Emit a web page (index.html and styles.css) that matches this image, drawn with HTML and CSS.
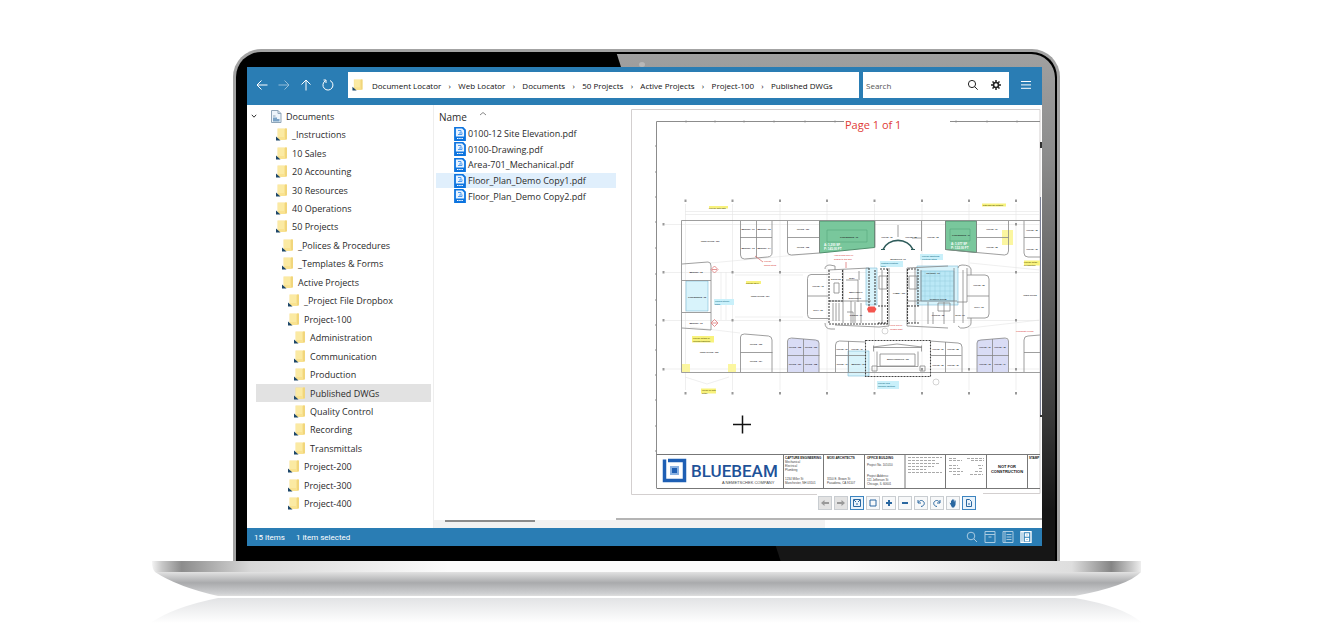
FILE: index.html
```
<!DOCTYPE html>
<html lang="en">
<head>
  <meta charset="UTF-8">
  <title>Document Locator</title>
  <link rel="stylesheet" href="styles.css">
</head>
<body>

  <!-- shared icons -->
  <svg class="defs" width="0" height="0" aria-hidden="true">
    <symbol id="folder" viewBox="0 0 12 13">
      <path d="M1.500 .5h9v10.500l-1.500 1h-7.500z" fill="#f9e290"/>
      <path d="M9 .5h2v11H9z" fill="#f1d67c"/>
      <path d="M2 1h6v8H2z" fill="#fbeaa3"/>
      <path d="M0 8.500l4.500 4H0z" fill="#1d4669"/>
    </symbol>
    <symbol id="pdf" viewBox="0 0 12 14">
      <path d="M1 .5h7.500L11 3v10.500H1z" fill="#e8f3ff" stroke="#0d74df" stroke-width="1.800"/>
      <path d="M1 9.500h10v4H1z" fill="#0d74df"/>
      <path d="M4 3.500h3v2.500H5M8 5.500v2H4" fill="none" stroke="#4b9af0"/>
      <path d="M3 11.500h6" stroke="#fff" stroke-dasharray="1.500 .7"/>
    </symbol>
  </svg>

  <div class="laptop">
    <div class="lid">
      <span class="camera"></span>
      <main class="screen">

        <header class="toolbar">
          <div class="nav-buttons">
            <button aria-label="Back"><svg viewBox="0 0 12 12"><path d="M11.500 6H1M5.500 1.500L1 6l4.500 4.500"/></svg></button>
            <button aria-label="Forward" class="dim"><svg viewBox="0 0 12 12"><path d="M.5 6H11M6.500 1.500L11 6l-4.500 4.500"/></svg></button>
            <button aria-label="Up"><svg viewBox="0 0 12 12"><path d="M6 11.500V1M1.500 5.500L6 1l4.500 4.500"/></svg></button>
            <button aria-label="Refresh"><svg viewBox="0 0 12 12"><path d="M8 1.500a5 5 0 1 1-4.500.2M1.500 1h2.500v3"/></svg></button>
          </div>
          <nav class="address">
            <svg class="folder"><use href="#folder"/></svg>
            <a href="#">Document Locator</a><i>›</i>
            <a href="#">Web Locator</a><i>›</i>
            <a href="#">Documents</a><i>›</i>
            <a href="#">50 Projects</a><i>›</i>
            <a href="#">Active Projects</a><i>›</i>
            <a href="#">Project-100</a><i>›</i>
            <a href="#">Published DWGs</a>
          </nav>
          <div class="search">
            <input type="text" placeholder="Search" aria-label="Search">
            <button aria-label="Find"><svg viewBox="0 0 12 12"><circle cx="5" cy="5" r="3.600"/><path d="M7.700 7.700l3 3"/></svg></button>
            <button aria-label="Settings"><svg viewBox="0 0 12 12"><circle cx="6" cy="6" r="2.500" stroke-width="1.600"/><path d="M6 1v2M6 9v2M1 6h2M9 6h2M2.500 2.500l1.300 1.300M8.200 8.200l1.300 1.300M9.500 2.500L8.200 3.800M3.800 8.200L2.500 9.500" stroke-width="1.500"/></svg></button>
          </div>
          <button class="menu" aria-label="Menu"><svg viewBox="0 0 12 12"><path d="M1 2.500h10M1 5.900h10M1 9.300h10"/></svg></button>
        </header>

        <div class="main">
          <ul class="tree">
            <li class="root"><svg class="chevron" viewBox="0 0 6 6"><path d="M.8 1.800L3 4.200l2.200-2.400"/></svg><svg class="doc" viewBox="0 0 12 13"><path d="M1.500.5h6.500l3 3v9H1.500z" fill="#edf4fa" stroke="#8fa5b8"/><path d="M8 .5v3h3M3 6h2.500" fill="none" stroke="#8fa5b8"/><path d="M3 7.500h4v1.500h2.500v2.500H3z" fill="#7ba3c6"/></svg><a href="#">Documents</a></li>
            <li class="l1"><svg class="folder"><use href="#folder"/></svg><a href="#">_Instructions</a></li>
            <li class="l1"><svg class="folder"><use href="#folder"/></svg><a href="#">10 Sales</a></li>
            <li class="l1"><svg class="folder"><use href="#folder"/></svg><a href="#">20 Accounting</a></li>
            <li class="l1"><svg class="folder"><use href="#folder"/></svg><a href="#">30 Resources</a></li>
            <li class="l1"><svg class="folder"><use href="#folder"/></svg><a href="#">40 Operations</a></li>
            <li class="l1"><svg class="folder"><use href="#folder"/></svg><a href="#">50 Projects</a></li>
            <li class="l2"><svg class="folder"><use href="#folder"/></svg><a href="#">_Polices &amp; Procedures</a></li>
            <li class="l2"><svg class="folder"><use href="#folder"/></svg><a href="#">_Templates &amp; Forms</a></li>
            <li class="l2"><svg class="folder"><use href="#folder"/></svg><a href="#">Active Projects</a></li>
            <li class="l3"><svg class="folder"><use href="#folder"/></svg><a href="#">_Project File Dropbox</a></li>
            <li class="l3"><svg class="folder"><use href="#folder"/></svg><a href="#">Project-100</a></li>
            <li class="l4"><svg class="folder"><use href="#folder"/></svg><a href="#">Administration</a></li>
            <li class="l4"><svg class="folder"><use href="#folder"/></svg><a href="#">Communication</a></li>
            <li class="l4"><svg class="folder"><use href="#folder"/></svg><a href="#">Production</a></li>
            <li class="l4 selected"><svg class="folder"><use href="#folder"/></svg><a href="#">Published DWGs</a></li>
            <li class="l4"><svg class="folder"><use href="#folder"/></svg><a href="#">Quality Control</a></li>
            <li class="l4"><svg class="folder"><use href="#folder"/></svg><a href="#">Recording</a></li>
            <li class="l4"><svg class="folder"><use href="#folder"/></svg><a href="#">Transmittals</a></li>
            <li class="l3"><svg class="folder"><use href="#folder"/></svg><a href="#">Project-200</a></li>
            <li class="l3"><svg class="folder"><use href="#folder"/></svg><a href="#">Project-300</a></li>
            <li class="l3"><svg class="folder"><use href="#folder"/></svg><a href="#">Project-400</a></li>
          </ul>

          <div class="content">
            <div class="panes">
              <section class="files">
                <button class="sort">Name <svg viewBox="0 0 8 5"><path d="M1 4l3-2.500L7 4"/></svg></button>
                <ul>
                  <li><svg><use href="#pdf"/></svg><a href="#">0100-12 Site Elevation.pdf</a></li>
                  <li><svg><use href="#pdf"/></svg><a href="#">0100-Drawing.pdf</a></li>
                  <li><svg><use href="#pdf"/></svg><a href="#">Area-701_Mechanical.pdf</a></li>
                  <li class="selected"><svg><use href="#pdf"/></svg><a href="#">Floor_Plan_Demo Copy1.pdf</a></li>
                  <li><svg><use href="#pdf"/></svg><a href="#">Floor_Plan_Demo Copy2.pdf</a></li>
                </ul>
              </section>

              <section class="viewer">
                <svg class="sheet" viewBox="616 105 426 391">
                  <!-- sheet frame -->
                  <path class="edge" d="M817 494.500H631.500V109.500H1040V493.500H983"/>
                  <path class="frame" d="M844 121.500H656.500V488M950 121.500H1040"/>
                  <path class="frame" d="M655 146h2M655 172h2M655 197h2M655 222h2M655 248h2M655 274h2M655 300h2M655 325h2M655 350h2M655 375h2M655 400h2M655 426h2M655 451h2M686 120.500v2M715 120.500v2M744 120.500v2M774 120.500v2M805 120.500v2M835 120.500v2M956 120.500v2M987 120.500v2M1017 120.500v2"/>
                  <text class="page-no" x="845" y="129">Page 1 of 1</text>

                  <!-- column grid -->
                  <path class="grid" d="M685.500 204V390M732.500 204V390M780 204V390M827 204V390M874.500 204V390M922 204V390M969 204V390M1016 204V390M665 224.500h375M665 272.500h375M665 320.500h375M665 369h375M685 211.500h355M685 214.500h355"/>
                  <path class="mark" d="M685.500 199.500v2.500M732.500 199.500v2.500M780 199.500v2.500M827 199.500v2.500M874.500 199.500v2.500M922 199.500v2.500M969 199.500v2.500M1016 199.500v2.500M685.500 392v2.500M732.500 392v2.500M780 392v2.500M827 392v2.500M874.500 392v2.500M922 392v2.500M969 392v2.500M1016 392v2.500M663.500 223v2.500M663.500 271v2.500M663.500 319v2.500M663.500 368v2.500M732.500 271v2.500M780 271v2.500M732.500 319v2.500M780 319v2.500M1016 271v2.500M1016 319v2.500M1016 223v2.500M1016 368v2.500M969 368v2.500M922 368v2.500"/>
                  <path class="grid" d="M690 327L740 333M710 263L830 252M721 272V320M726 272V320M735 275h68M735 317h68M970 328L1040 320M970 263L1040 270M685 377l22 7 22-7"/>

                  <!-- highlighted rooms -->
                  <path class="green" d="M819.500 221H874.500V247.500L819.500 253zM945.500 221H976.500V252.500L945.500 249.500z"/>
                  <path d="M827 230h40v12h-40zM950 229h20v12h-20z" fill="none" stroke="#54a87c" stroke-width=".6"/>
                  <path class="cyan" d="M686 281h22v30h-22zM866 268h11v37h-11zM917 266h41v39h-41zM848 351h21v25h-21z"/>
                  <path class="cyan deep" d="M921 271h33v30h-33z"/>
                  <path d="M925 271v30M930 271v30M935 271v30M940 271v30M945 271v30M950 271v30M921 276h33M921 281h33M921 286h33M921 291h33M921 296h33" stroke="#96ccde" stroke-width=".5"/>
                  <path class="purple" d="M788 340l4-2 27 2v32h-31zM977 340l27-2 4 2v32h-31z"/>
                  <path class="yellow" d="M682 364h8v8h-8zM728 364h8v8h-8zM1002 230h11v15h-11z"/>
                  <path class="note-cyan" d="M714 299h20v6h-20zM920 254h23v6h-23zM880 261h23v6h-23zM877 381h22v8h-22z"/>
                  <path class="note-yellow" d="M692 336h22v6.500h-22zM701 388.500h15v5h-15zM746 281h15v3h-15zM709 206h19v2.500h-19zM982 203.500h24v3h-24zM1024 260.500h16v5h-16z"/>

                  <!-- outer walls and offices -->
                  <path class="wall" d="M1040 220.500H681.500V372.500H1040"/>
                  <path class="wall" d="M740.500 221V255q0 4 4 4l23-2q4.500-.5 4.500-4V221M756.500 221V258M740 237.500h32M787.500 221V252q0 3 4 3l28-2V221M787.500 237.500h32"/>
                  <path class="wall" d="M682 264l26-2q3 0 3 4v64l-29-2M682 280.500h29M682 312.500h29"/>
                  <path class="wall" d="M740.500 372V337q0-3 4-3l24 2q3.500.5 3.500 4v32M740.500 352.500h32M787.500 372V341q0-3 4-3l24 2q3.500.5 3.500 3v29M803.500 339v33M787.500 355.500h32M835.500 372V345q0-4 4-4l26 1M848.500 341v31M835.500 355.500h30"/>
                  <path class="wall" d="M828 274.500h-17q-3.500 0-3.500 4v36q0 4 3.500 4h17M807.500 296h21M967 275h18q4 0 4 4v35q0 4-4 4h-18M967 296h22"/>
                  <path class="wall" d="M921.500 221V251M945.500 221V249.500L976.500 252.500V221M976.500 252.500l28 2.500q4 0 4-4V221M976.500 237.500h32M1040 257h-12q-4 0-4-4V221M1024 237.500h16M875 221V247.500M898 225v12M912 238h9"/>
                  <path class="wall" d="M930 341l28 2q4 0 4 4v25M945.500 342v30M930.500 355.500h31M977 372v-29q0-3 4-3l24-2q3.500 0 3.500 3v31M992.500 339v33M977 355.500h32M1040 335l-12 1q-4 0-4 4v32M1024 352.500h16"/>
                  <path d="M883 249.500a16 14 0 0 1 30 0" fill="none" stroke="#2f5c5b" stroke-width="1.600"/>
                  <path d="M881 249.500h4M911 249.500h4" stroke="#2f5c5b"/>

                  <!-- building cores -->
                  <path class="wall" d="M828 270l41-2M825 269q0-4 5-4l5 1v4M825 323q0 6 6 6h4M889 268v58l-10 1-44-2M843 269v54M829 301h42M846 280h12v22M851 301v22M859 271v9M855 302v21M907 268v58l41 2M907 268l41-2M907 301h50M921 270v31M954 268v55M963 270v53M928 302v22M944 302v22M957 302h10v-34M958 268q0-3 4-3 8 0 9 4v6M958 326q2 3 6 2 7-1 7-5v-5M915 270v53M882 270v53"/>
                  <path class="dashed" d="M829 270v54M842.500 270v30M829 301h14M829 324h60M869 268v39M875 270v35M887.500 269v55M880 269h8M878 323h10M878 306h10M907.500 269v55M908 269h8M908 306h12M908 323h12M918 269v37"/>
                  <path class="wall" d="M833 303v18M836 303v18M839 303v18M834 283h5v10h-5zM879 276h8v13h-8zM909 276h8v13h-8zM847 312h6v11M861 303v20M933 312v12M938 303h12v8h-12z" stroke-width=".5"/>
                  <path class="dashed" d="M865.500 340.500H930.500V376.500H865.500z"/>
                  <path class="wall" d="M873.500 345.500v6M921.500 345.500v6M873 347.500h49M873 347l24-3 25 3M877 351.500v15h41v-15M872 366h5v5h-5zM920 366h5v5h-5zM880 354h35v12h-35z"/>
                  <path d="M868.500 306.500h6l2 2.500-2 3.500h-6l-1.500-3.500z" fill="#f4564f"/>
                  <path class="red-line" d="M714.500 266l3.500 3.500-3.500 3.500-3.500-3.500zM714.500 319.500l3.500 3.500-3.500 3.500-3.500-3.500zM712 269.500h5M712 323h5M846 262v6M755 256l8 6"/>
                  <circle cx="885" cy="331" r="3" fill="none" stroke="#aaa" stroke-width=".5"/>
                  <circle cx="936" cy="382" r="3" fill="none" stroke="#aaa" stroke-width=".5"/>

                  <!-- room labels -->
                  <g class="room">
                    <text x="710" y="241.500">OPEN OFFICE - 100</text>
                    <text x="748" y="229.500">MEETING - 01</text><text x="764" y="229.500">MEETING - 02</text>
                    <text x="748" y="249">MEETING - 03</text><text x="764" y="249">MEETING - 04</text>
                    <text x="803" y="230">OFFICE - 101</text><text x="803" y="247.500">OFFICE - 102</text>
                    <text x="849" y="237.500">CONFERENCE - 10</text>
                    <text x="696" y="272.500">MEETING - 05</text><text x="697" y="297.500">CONFERENCE - 02</text><text x="696" y="323.500">MEETING - 06</text>
                    <text x="760" y="297">OPEN OFFICE - 101</text><text x="709" y="352.500">OPEN OFFICE - 102</text>
                    <text x="756" y="345">OFFICE - 103</text><text x="756" y="362">OFFICE - 104</text>
                    <text x="795" y="348">OFFICE - 105</text><text x="811" y="348">OFFICE - 106</text>
                    <text x="795" y="365">OFFICE - 107</text><text x="811" y="365">OFFICE - 108</text>
                    <text x="842" y="350">OFFICE - 09</text><text x="857" y="350">OFFICE - 10</text>
                    <text x="842" y="365">OFFICE - 11</text><text x="858" y="365">MEETING - 12</text>
                    <text x="818" y="287">OFFICE - 13</text><text x="818" y="311">COPY - 20</text>
                    <text x="836" y="280">STORAGE</text><text x="852" y="279">ELEV.</text>
                    <text x="856" y="293">MECHANICAL</text><text x="855" y="299">ELECTRICAL</text><text x="856" y="316">TOILETS - 01</text>
                    <text x="887" y="238">OFFICE - 21</text><text x="911" y="238">OFFICE - 22</text><text x="933" y="238">OFFICE - 23</text>
                    <text x="961" y="236">CONFERENCE - 11</text><text x="992" y="230">OFFICE - 24</text><text x="992" y="247.500">OFFICE - 25</text>
                    <text x="898" y="260">RECEPTION - 01</text><text x="899" y="294">LOBBY - 100</text>
                    <text x="933" y="274">TRAINING - 01</text><text x="938" y="299.500">CONTROL ROOM</text><text x="938" y="316">TOILETS - 02</text><text x="960" y="316">STOR - 01</text>
                    <text x="979" y="285.500">OFFICE - 26</text><text x="979" y="308">COPY - 21</text><text x="1030" y="296">OPEN OFFICE</text>
                    <text x="898" y="359.500">MULTI FUNCTION - 101</text>
                    <text x="938" y="350">OFFICE - 27</text><text x="953" y="350">OFFICE - 28</text><text x="938" y="366">OFFICE - 29</text><text x="953" y="366">OFFICE - 30</text>
                    <text x="985" y="348">OFFICE - 31</text><text x="1000" y="348">OFFICE - 32</text><text x="985" y="365">OFFICE - 33</text><text x="1000" y="365">OFFICE - 34</text>
                    <text x="1032" y="231">OFFICE - 35</text><text x="1032" y="250">OFFICE - 36</text>
                  </g>
                  <g class="note">
                    <text x="709" y="208.500">Provide with data</text><text x="983" y="206">Data and fax network</text>
                    <text x="746" y="284">Provide Wi-Fi</text><text x="693" y="339">Provide details of</text><text x="693" y="342">flooring transition</text>
                    <text x="702" y="391">LEVEL 01 note</text><text x="702" y="394">detail</text>
                    <text x="1024" y="263">Provide detail</text><text x="1024" y="266">of transition</text>
                  </g>
                  <g class="note blue">
                    <text x="715" y="302">Curved interior</text><text x="715" y="305">glass</text>
                    <text x="922" y="257">Provide additional</text><text x="922" y="260">electrical rating</text>
                    <text x="881" y="264">Custom reception</text><text x="881" y="267">desk</text>
                    <text x="878" y="384">Provide new</text><text x="878" y="387">operable partition</text>
                  </g>
                  <g class="note red">
                    <text x="834" y="256">Add second layer of</text><text x="834" y="260">drywall to this wall</text>
                    <text x="764" y="262">Provide</text><text x="764" y="266">sound rating</text>
                    <text x="890" y="326">Verify size of</text><text x="890" y="330">column shaft</text><text x="1016" y="332">Coordinate ceiling</text>
                  </g>
                  <g class="note white">
                    <text x="824" y="246">A: 1,200 SF</text><text x="824" y="250">P: 145.00 FT</text>
                    <text x="951" y="245">A: 1,077 SF</text><text x="951" y="249">P: 132.00 FT</text>
                  </g>

                  <path class="cross" d="M733 424.500h18M742.500 415.500v18"/>

                  <!-- title block -->
                  <path class="title-line" d="M656.500 454.500H1040M656.500 488.500H1040M783.500 454.500v34M823.500 454.500v34M864.500 454.500v34M905 454.500v34M945.500 454.500v34M986.500 454.500v34M1027.500 454.500v34"/>
                  <path d="M668 460.500h16.500v20h-20V459.500" fill="none" stroke="#1e5fb4" stroke-width="3.500"/>
                  <path d="M670 466h9v9h-9z" fill="#8bb2e2"/>
                  <path d="M672 468h5v5h-5z" fill="#1e5fb4"/>
                  <text class="brand" x="691" y="477">BLUEBEAM</text>
                  <text class="brand-sub" x="722" y="484">A NEMETSCHEK COMPANY</text>
                  <g class="block">
                    <text class="b" x="785" y="459">CAPTURE ENGINEERING</text>
                    <text x="785" y="463">Mechanical</text><text x="785" y="467">Electrical</text><text x="785" y="471">Plumbing</text>
                    <text x="785" y="480">1234 Miller St</text><text x="785" y="484">Manchester, NH 03101</text>
                    <text class="b" x="827" y="459">MOXI ARCHITECTS</text>
                    <text x="827" y="480">3550 E. Brown St</text><text x="827" y="484">Pasadena, CA 91107</text>
                    <text class="b" x="867" y="459">OFFICE BUILDING</text>
                    <text x="867" y="466">Project No. 101010</text>
                    <text x="867" y="477">Project Address:</text><text x="867" y="481">111 Jefferson St</text><text x="867" y="485">Chicago, IL 60601</text>
                    <text class="b" x="1029" y="459">STAMP</text>
                  </g>
                  <path class="fine" d="M908 457.500h34M908 460.500h28M908 463.500h32M908 466.500h26M908 469.500h18M908 472.500h34M949 458.500h8M967 458.500h17M949 460.500h13M971 460.500h13M949 465.500h9M978 465.500h5M949 468.500h12M979 468.500h4M949 471.500h14M975 471.500h8M953 474.500h8M970 474.500h13"/>
                  <text class="stamp" x="1007" y="468">NOT FOR</text>
                  <text class="stamp" x="1007" y="473">CONSTRUCTION</text>

                  <!-- scroll marks on the right edge -->
                  <path d="M1041 142v6M1041 415v2" stroke="#333" stroke-width="2"/>
                  <path d="M1040.500 197V415" stroke="#7d8297"/>
                </svg>

                <div class="viewer-tools">
                  <button class="off" aria-label="Previous page"><svg viewBox="0 0 12 12"><path d="M2 6l3.500-3v2H10v2H5.500v2z"/></svg></button>
                  <button class="off" aria-label="Next page"><svg viewBox="0 0 12 12"><path d="M10 6L6.500 3v2H2v2h4.500v2z"/></svg></button>
                  <button class="on" aria-label="Fit page"><svg viewBox="0 0 12 12"><path class="s" d="M2.500 2.500h7v7h-7zM3 3l2 2M9 3l-2 2M5 7h2"/></svg></button>
                  <button aria-label="Actual size"><svg viewBox="0 0 12 12"><path class="s" d="M3 3h6v6H3z"/></svg></button>
                  <button aria-label="Zoom in"><svg viewBox="0 0 12 12"><path d="M5 3h2v2h2v2H7v2H5V7H3V5h2z"/></svg></button>
                  <button aria-label="Zoom out"><svg viewBox="0 0 12 12"><path d="M3 5h6v2H3z"/></svg></button>
                  <button aria-label="Rotate left"><svg viewBox="0 0 12 12"><path class="s" d="M6 9.500c3.500-.5 4-3.500 2.500-5S4.500 3 3.500 5.500M3 3v3h3"/></svg></button>
                  <button aria-label="Rotate right"><svg viewBox="0 0 12 12"><path class="s" d="M6 9.500c-3.500-.5-4-3.500-2.500-5s4-1.500 5 1M9 3v3H6"/></svg></button>
                  <button aria-label="Pan"><svg viewBox="0 0 12 12"><path d="M2.500 5.500l1.500.8V3.500h1v2V2.500h1v3l.2-3h1v3l.5-2h1l-.2 4.500-1.500 2.500H5z"/></svg></button>
                  <button class="on" aria-label="Page view"><svg viewBox="0 0 12 12"><path class="s" d="M3.500 2.500h3l2 2v5h-5zM5 7h2"/></svg></button>
                </div>
              </section>
            </div>
            <div class="scroll"><span></span></div>
          </div>
        </div>

        <footer class="status">
          <span>15 items</span>
          <span>1 item selected</span>
          <div class="views">
            <button aria-label="Find"><svg viewBox="0 0 12 12"><circle cx="5" cy="5" r="3.800"/><path d="M7.800 7.800l3.200 3.200"/></svg></button>
            <button aria-label="Archive"><svg viewBox="0 0 12 12"><path d="M1 .5h10v11H1zM1 3.500h10M4.500 6h3"/></svg></button>
            <button aria-label="List"><svg viewBox="0 0 12 12"><path d="M1 .5h10v11H1zM3 .5v11M4.500 3.500h5M4.500 6h5M4.500 8.500h5"/></svg></button>
            <button aria-label="Preview" class="active"><svg viewBox="0 0 12 12"><path d="M1 .5h10v11H1zM3 .5v11M5.500 3h3v2h-3zM5.500 7.500h3v2h-3z" stroke-width="1.400"/></svg></button>
          </div>
        </footer>
      </main>
    </div>

    <svg class="base" viewBox="0 0 989 66" preserveAspectRatio="none" aria-hidden="true">
      <defs>
        <linearGradient id="rim">
          <stop offset="0" stop-color="#f4f4f4"/>
          <stop offset=".01" stop-color="#c8c8c8"/>
          <stop offset=".03" stop-color="#8c8c8c"/>
          <stop offset=".07" stop-color="#b8b8b8"/>
          <stop offset=".1" stop-color="#d8d8d8"/>
          <stop offset=".3" stop-color="#fbfbfb"/>
          <stop offset=".7" stop-color="#fbfbfb"/>
          <stop offset=".93" stop-color="#dedede"/>
          <stop offset=".97" stop-color="#858585"/>
          <stop offset=".99" stop-color="#c8c8c8"/>
          <stop offset="1" stop-color="#eee"/>
        </linearGradient>
        <linearGradient id="body" x2="0" y2="1">
          <stop offset="0" stop-color="#e2e2e2"/>
          <stop offset=".45" stop-color="#a9aaac"/>
          <stop offset=".9" stop-color="#cfd0d2"/>
          <stop offset="1" stop-color="#dedede"/>
        </linearGradient>
        <linearGradient id="mirror" x2="0" y2="1">
          <stop offset="0" stop-color="#e2e3e5"/>
          <stop offset=".9" stop-color="#fff"/>
        </linearGradient>
      </defs>
      <path d="M0 0H989V11H3Q0 8 0 0z" fill="url(#rim)"/>
      <path d="M3 11H989Q976 25 923 35H66Q26 26 3 11z" fill="url(#body)"/>
      <path d="M66 37H923Q970 45 989 61L986 65H3L0 61Q22 46 66 37z" fill="url(#mirror)"/>
    </svg>
  </div>

</body>
</html>
```
FILE: styles.css
```
body {
  margin: 0;
  background: #fff;
  color: #2b2b2b;
  font-family: "Open Sans", "Noto Sans", sans-serif;
  font-size: 9px;
}

a {
  color: inherit;
  text-decoration: none;
}

button {
  display: flex;
  align-items: center;
  justify-content: center;
  padding: 0;
  border: none;
  background: none;
  color: inherit;
  font-family: inherit;
  cursor: pointer;
}

ul {
  margin: 0;
  padding: 0;
  list-style: none;
}

svg {
  display: block;
  flex: none;
}

.defs {
  position: absolute;
}

/* laptop */
.laptop {
  padding: 49px 182px 0 152px;
}

.lid {
  position: relative;
  margin: 0 81px;
  padding: 15px 15px 15px 11px;
  border: 3px solid #a3a3a3;
  border-bottom: none;
  border-radius: 28px 28px 0 0;
  background: #000;
}

/* light falling across the bezel */
.lid::before {
  content: "";
  position: absolute;
  inset: 2px 2px 0 0;
  border-radius: 0 24px 0 0;
  background: linear-gradient(#a0a0a0, #8c8c8c 20%, #3c3c3c 70%, #161616 90%);
  clip-path: polygon(46.500% 0, 100% 0, 100% 100%, 66.500% 100%);
}

.camera {
  position: absolute;
  top: 10px;
  left: 403px;
  width: 6px;
  height: 5px;
  border-radius: 50%;
  background: #b8b8b8;
}

.screen {
  position: relative;
  display: flex;
  flex-direction: column;
  background: #fff;
}

/* top bar */
.toolbar {
  display: flex;
  align-items: center;
  box-sizing: border-box;
  height: 38px;
  padding: 0 10px 2px 0;
  background: #2a7db4;
  font-size: 8px;
}

.toolbar svg {
  width: 12px;
  height: 12px;
  fill: none;
  stroke: currentColor;
}

.nav-buttons {
  display: flex;
  flex: none;
  gap: 10px;
  box-sizing: border-box;
  width: 101px;
  padding-left: 9px;
  color: #fff;
}

.dim {
  opacity: .5;
}

.address {
  display: flex;
  flex: 1;
  align-items: center;
  min-width: 0;
  height: 26px;
  padding-left: 4px;
  background: #fff;
  color: #111;
  white-space: nowrap;
}

.toolbar .folder {
  margin-right: 8px;
  stroke: none;
}

.address i {
  width: 17px;
  font-style: normal;
  text-align: center;
}

.search {
  display: flex;
  flex: none;
  align-items: center;
  gap: 11px;
  box-sizing: border-box;
  width: 146px;
  height: 26px;
  margin: 0 11px 0 4px;
  padding: 0 7px 0 3px;
  background: #fff;
  color: #222;
}

.search input {
  flex: 1;
  min-width: 0;
  padding: 0;
  border: none;
  outline: none;
  font: inherit;
}

.search input::placeholder {
  color: #555;
}

.menu {
  color: #fff;
}

/* folders */
.main {
  display: flex;
  height: 423px;
}

.tree {
  display: flex;
  flex-direction: column;
  box-sizing: border-box;
  width: 187px;
  padding: 2px 2px 15px 0;
  border-right: 1px solid #eee;
}

.tree li {
  display: flex;
  flex: 1;
  align-items: center;
  gap: 4px;
  margin-left: 9px;
}

.folder,
.doc {
  width: 12px;
  height: 13px;
}

.tree .root {
  margin-left: 0;
  padding-left: 4px;
}

.chevron {
  width: 6px;
  height: 6px;
  margin-right: 9px;
  fill: none;
  stroke: #333;
}

.tree .l1 { padding-left: 20px; }
.tree .l2 { padding-left: 26px; }
.tree .l3 { padding-left: 32px; }
.tree .l4 { padding-left: 38px; }

.tree .selected {
  background: #e2e2e2;
}

/* files */
.content {
  display: flex;
  flex: 1;
  flex-direction: column;
  min-width: 0;
}

.panes {
  display: flex;
  flex: 1;
  min-height: 0;
}

.files {
  width: 182px;
  padding-top: 3px;
}

.sort {
  height: 18px;
  gap: 12px;
  padding-left: 5px;
  font-size: 10px;
}

.sort svg {
  width: 8px;
  height: 5px;
  margin-bottom: 7px;
  fill: none;
  stroke: #888;
}

.files ul {
  display: grid;
  grid-auto-rows: 1fr;
  height: 78px;
}

.files li {
  display: flex;
  align-items: center;
  gap: 2px;
  margin-left: 2px;
  padding-left: 18px;
  white-space: nowrap;
}

.files li svg {
  width: 12px;
  height: 14px;
}

.files .selected {
  background: #e0effc;
}

.scroll {
  width: 391px;
  height: 8px;
  background: #f2f2f2;
}

.scroll span {
  display: block;
  width: 90px;
  height: 2px;
  margin-left: 11px;
  background: #8b8b8b;
}

/* drawing */
.viewer {
  flex: 1;
  min-width: 0;
  border-bottom: 2px solid #b4b4b4;
}

.sheet {
  width: 100%;
  height: auto;
}

.sheet text {
  font-family: "Liberation Sans", Arial, sans-serif;
}

.edge { fill: none; stroke: #d3cfcf; }
.frame { fill: none; stroke: #8c8c8c; }
.grid { fill: none; stroke: #e4e4e4; stroke-width: .6; }
.mark { stroke: #999; stroke-width: 2; }
.wall { fill: none; stroke: #868686; stroke-width: .8; }
.dashed { fill: none; stroke: #444; stroke-width: 1.1; stroke-dasharray: 2 1; }
.green { fill: #79c79c; stroke: #4f8f6c; }
.cyan { fill: #c8eefa; stroke: #7dbdd6; stroke-width: .6; fill-opacity: .7; }
.deep { fill: #aee3f3; }
.purple { fill: #d9dcf5; }
.yellow { fill: #fbf6a0; }
.note-cyan { fill: #c9f0fa; }
.note-yellow { fill: #f8f27c; }
.red-line { fill: none; stroke: #d77; stroke-width: .8; }
.cross { stroke: #111; stroke-width: 1.5; }
.title-line { fill: none; stroke: #777; }
.fine { stroke: #aaa; stroke-dasharray: 3 1; }

.sheet .page-no {
  fill: #e03a36;
  font-family: "Open Sans", "Noto Sans", sans-serif;
  font-size: 11px;
}

.room {
  fill: #222;
  font-size: 2px;
  font-weight: bold;
  text-anchor: middle;
}

.note {
  fill: #6b6a12;
  font-size: 2px;
  font-weight: bold;
}

.blue { fill: #2f7f99; }
.red { fill: #e06060; }
.white { fill: #fff; font-size: 3px; }

.sheet .brand {
  fill: #1e5298;
  font-family: Roboto, sans-serif;
  font-size: 17px;
  font-weight: 500;
}

.brand-sub {
  fill: #444;
  font-size: 4px;
}

.block {
  fill: #444;
  font-size: 3px;
}

.b {
  fill: #111;
  font-weight: bold;
}

.stamp {
  fill: #111;
  font-size: 4px;
  font-weight: bold;
  text-anchor: middle;
}

.viewer-tools {
  display: flex;
  justify-content: flex-end;
  gap: 2px;
  padding-right: 66px;
}

.viewer-tools button {
  box-sizing: border-box;
  width: 14px;
  height: 14px;
  border: 1px solid #c9cdd1;
  background: #f7f8f9;
}

.viewer-tools svg {
  width: 12px;
  height: 12px;
  fill: #2a67a0;
}

.viewer-tools .s {
  fill: none;
  stroke: #2a67a0;
}

.viewer-tools .on {
  border-color: #3d84bf;
  background: #e9f3fb;
}

.viewer-tools .off {
  background: #e3e3e3;
}

.viewer-tools .off svg {
  fill: #999;
}

/* bottom bar */
.status {
  display: flex;
  align-items: center;
  gap: 11px;
  height: 18px;
  padding: 0 10px 0 7px;
  background: #2a7db4;
  color: #fff;
  font-family: Roboto, sans-serif;
  font-size: 8px;
}

.views {
  display: flex;
  gap: 6px;
  margin-left: auto;
}

.views button {
  opacity: .6;
}

.views .active {
  opacity: 1;
}

.views svg {
  width: 12px;
  height: 12px;
  fill: none;
  stroke: #fff;
}

.base {
  width: 100%;
  height: 66px;
}
```
